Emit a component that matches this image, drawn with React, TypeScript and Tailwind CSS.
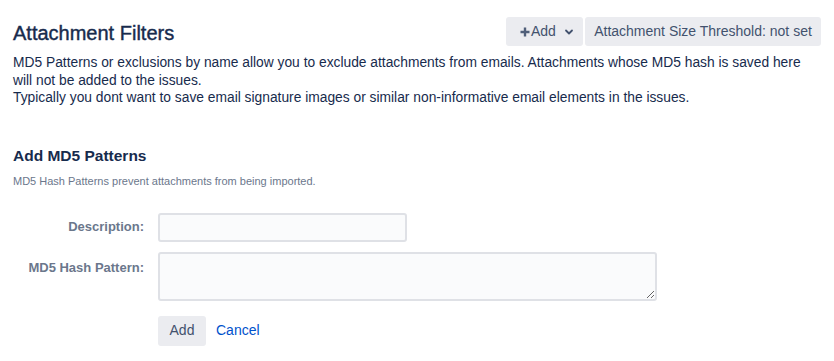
export default function App() {
  return (
    <div className="min-h-[361px] w-[834px] bg-white px-[13px] pt-[17px] text-[14px] text-[#172B4D] [font-family:'Liberation_Sans',Arial,sans-serif]">
      <div className="flex items-start justify-between">
        <h1 className="mt-[4px] text-[20px] leading-[24px] text-[#172B4D] [-webkit-text-stroke:0.4px_#172B4D]">Attachment Filters</h1>
        <div className="flex gap-[2px]">
          <button className="flex h-[29px] w-[77px] items-center rounded-[3px] bg-[#EBECF0] pl-[14px] text-[#42526E]">
            <svg width="10" height="10" viewBox="0 0 10 10" className="mr-[1px]">
              <path d="M5 0.5v9M0.5 5h9" stroke="#505F79" strokeWidth="2.4" />
            </svg>
            <span>Add</span>
            <svg width="10" height="10" viewBox="0 0 10 10" className="ml-[8px]">
              <path d="M2 3.5l3 3 3-3" stroke="#42526E" strokeWidth="1.8" fill="none" strokeLinecap="round" strokeLinejoin="round" />
            </svg>
          </button>
          <button className="h-[29px] w-[236px] rounded-[3px] bg-[#EBECF0] text-center text-[#42526E]">
            Attachment Size Threshold: not set
          </button>
        </div>
      </div>
      <p className="mt-[8px] text-[13.8px] leading-[17.5px]">
        MD5 Patterns or exclusions by name allow you to exclude attachments from emails. Attachments whose MD5 hash is saved here will not be added to the issues.
        <br />
        Typically you dont want to save email signature images or similar non-informative email elements in the issues.
      </p>

      <h2 className="mt-[39px] text-[15.5px] font-semibold leading-[20px]">Add MD5 Patterns</h2>
      <p className="mt-[8px] text-[11px] leading-[14px] text-[#6B778C]">MD5 Hash Patterns prevent attachments from being imported.</p>

      <form className="mt-[25px] flex flex-col gap-[10px]">
        <div className="flex items-center">
          <label className="w-[132px] pr-[1px] text-right text-[13px] font-bold text-[#6B778C]">Description:</label>
          <input className="ml-[13px] h-[29px] w-[249px] rounded-[3px] border-2 border-[#DFE1E6] bg-[#FAFBFC] outline-none" />
        </div>
        <div className="flex items-start">
          <label className="mt-[6px] w-[132px] pr-[1px] text-right text-[13px] font-bold text-[#6B778C]">MD5 Hash Pattern:</label>
          <textarea className="ml-[13px] block h-[49px] w-[499px] rounded-[3px] border-2 border-[#DFE1E6] bg-[#FAFBFC] outline-none" />
        </div>
        <div className="ml-[145px] mt-[5px] flex items-center gap-[10px]">
          <button type="button" className="h-[30px] w-[48px] rounded-[3px] bg-[#EBECF0] text-[#42526E]">Add</button>
          <a href="#" className="text-[#0052CC]">Cancel</a>
        </div>
      </form>
    </div>
  );
}
